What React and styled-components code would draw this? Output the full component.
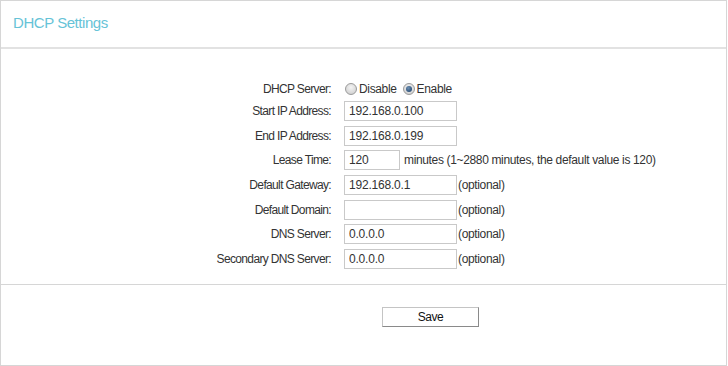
import { Fragment } from "react";
import styled, { createGlobalStyle } from "styled-components";

const GlobalStyle = createGlobalStyle`
  body {
    margin: 0;
    background: #fff;
    font-family: "Liberation Sans", Arial, sans-serif;
  }
`;

const textColor = "#333";
const lineColor = "#d6d6d6";

const Panel = styled.div`
  box-sizing: border-box;
  width: 727px;
  height: 366px;
  border: 1px solid ${lineColor};
  display: flex;
  flex-direction: column;
`;

const Header = styled.div`
  height: 48px;
  padding: 0 0 3px 12px;
  box-sizing: border-box;
  display: flex;
  align-items: center;
  border-bottom: 2px solid #e2e2e2;
`;

const Title = styled.h2`
  margin: 0;
  font-weight: normal;
  font-size: 15px;
  letter-spacing: -0.45px;
  color: #66c3d7;
`;

const Form = styled.div`
  display: grid;
  grid-template-columns: 330px auto;
  column-gap: 13px;
  row-gap: 4.67px;
  padding: 31.5px 0 15px;
  border-bottom: 1px solid ${lineColor};
`;

const Label = styled.label`
  text-align: right;
  font-size: 12px;
  letter-spacing: -0.65px;
  color: ${textColor};
  height: ${(p) => (p.$short ? "16px" : "20px")};
  line-height: ${(p) => (p.$short ? "16px" : "20px")};
`;

const Field = styled.div`
  display: flex;
  align-items: center;
  height: ${(p) => (p.$short ? "16px" : "20px")};
  font-size: 12px;
  letter-spacing: -0.35px;
  color: ${textColor};
`;

const TextInput = styled.input`
  box-sizing: border-box;
  width: ${(p) => p.$width || "113px"};
  height: 20px;
  margin: 0;
  padding: 0 4px;
  border: 1px solid #c9c9c9;
  font-family: "Liberation Sans", Arial, sans-serif;
  font-size: 12px;
  letter-spacing: -0.2px;
  color: ${textColor};
  outline: none;
`;

const Hint = styled.span`
  margin-left: ${(p) => p.$gap || "1px"};
  white-space: nowrap;
`;

const Radio = styled.span`
  box-sizing: border-box;
  width: 12px;
  height: 12px;
  border-radius: 50%;
  border: 1px solid #9a9a9a;
  background: radial-gradient(circle at 50% 35%, #f4f4f4, #c9c9c9);
  margin: 0 2px 0 1px;
  display: inline-flex;
  align-items: center;
  justify-content: center;
  &::after {
    content: "";
    width: 6px;
    height: 6px;
    border-radius: 50%;
    background: radial-gradient(circle at 40% 35%, #6d8fb3, #163a63);
    display: ${(p) => (p.$checked ? "block" : "none")};
  }
`;

const RadioText = styled.span`
  margin-right: 5px;
`;

const Footer = styled.div`
  flex: 1;
  padding: 22px 0 0 381px;
`;

const SaveButton = styled.button`
  box-sizing: border-box;
  width: 97px;
  height: 20px;
  background: #fff;
  border: 1px solid #c4c4c4;
  border-right-color: #8a8a8a;
  border-bottom-color: #8a8a8a;
  font-family: "Liberation Sans", Arial, sans-serif;
  font-size: 12px;
  letter-spacing: -0.5px;
  color: #111;
  padding: 0;
`;

const rows = [
  { label: "Start IP Address:", value: "192.168.0.100" },
  { label: "End IP Address:", value: "192.168.0.199" },
  {
    label: "Lease Time:",
    value: "120",
    width: "56px",
    hint: "minutes (1~2880 minutes, the default value is 120)",
    gap: "4px",
  },
  { label: "Default Gateway:", value: "192.168.0.1", hint: "(optional)" },
  { label: "Default Domain:", value: "", hint: "(optional)" },
  { label: "DNS Server:", value: "0.0.0.0", hint: "(optional)" },
  { label: "Secondary DNS Server:", value: "0.0.0.0", hint: "(optional)" },
];

export default function App() {
  return (
    <>
      <GlobalStyle />
      <Panel>
        <Header>
          <Title>DHCP Settings</Title>
        </Header>
        <Form>
          <Label $short>DHCP Server:</Label>
          <Field $short>
            <Radio />
            <RadioText>Disable</RadioText>
            <Radio $checked />
            <RadioText>Enable</RadioText>
          </Field>
          {rows.map((r) => (
            <Fragment key={r.label}>
              <Label>{r.label}</Label>
              <Field>
                <TextInput $width={r.width} defaultValue={r.value} />
                {r.hint && <Hint $gap={r.gap}>{r.hint}</Hint>}
              </Field>
            </Fragment>
          ))}
        </Form>
        <Footer>
          <SaveButton>Save</SaveButton>
        </Footer>
      </Panel>
    </>
  );
}
